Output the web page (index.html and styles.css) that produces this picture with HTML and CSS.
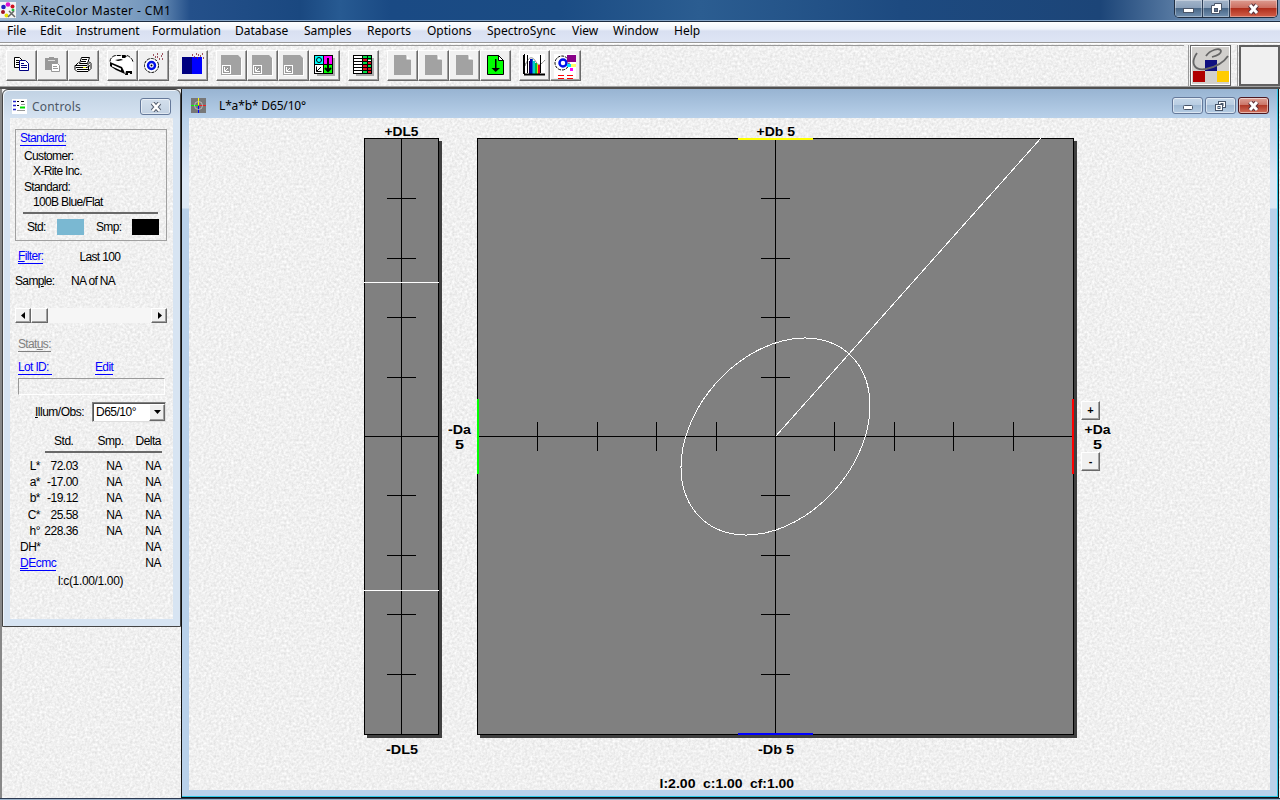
FILE: index.html
```
<!DOCTYPE html>
<html lang="en">
<head>
  <title>X-RiteColor Master - CM1</title>
  <meta charset="utf-8" />
  <link rel="stylesheet" href="styles.css">
</head>
<body>
  <div class="app">
    <div class="titlebar">
      <svg class="app-icon" width="16" height="16" viewBox="0 0 16 16">
        <rect width="16" height="16" fill="#f4f4f4"/>
        <circle cx="8" cy="2.500" r="2.300" fill="#e010d0"/><circle cx="3.500" cy="5" r="2.300" fill="#2020c0"/>
        <circle cx="12.500" cy="4.500" r="2" fill="#d01020"/><circle cx="3" cy="10" r="2" fill="#a01020"/>
        <circle cx="6.500" cy="13.500" r="2" fill="#e8e000"/><circle cx="13" cy="8" r="1.500" fill="#20c040"/>
        <path d="M9 9l6 6M14 9l-6 6" stroke="#666" stroke-width="1.500"/>
      </svg>
      <span class="title-text">X-RiteColor Master - CM1</span>
      <div class="window-buttons">
        <span class="wb wb-min"><svg width="13" height="12"><rect x="1.500" y="5.500" width="10" height="4" fill="#fff" stroke="#4a5568"/></svg></span>
        <span class="wb wb-max"><svg width="13" height="13"><path d="M4.500 1.500h7v7h-2v3h-8v-8h3z" fill="#fff" stroke="#4a5568"/><rect x="4.500" y="6.500" width="3" height="3" fill="#5c7390" stroke="#4a5568"/></svg></span>
        <span class="wb wb-close"><svg width="13" height="12" viewBox="0 0 13 12"><path d="M3 2l7 8M10 2l-7 8" stroke="#54303a" stroke-width="5"/><path d="M3 2l7 8M10 2l-7 8" stroke="#fff" stroke-width="3"/></svg></span>
      </div>
    </div>
    <div class="menubar">
      <span class="m1">File</span><span class="m2">Edit</span><span class="m3">Instrument</span><span class="m4">Formulation</span><span class="m5">Database</span><span class="m6">Samples</span><span class="m7">Reports</span><span class="m8">Options</span><span class="m9">SpectroSync</span><span class="m10">View</span><span class="m11">Window</span><span class="m12">Help</span>
    </div>
    <div class="toolbar">
      <div class="tools">
        <div class="tool-group">
          <span class="tool"><svg viewBox="0 0 30 30"><path d="M7.500 6.500h5l3 3v7h-8z" fill="#fff" stroke="#000"/><path d="M9 9.500h3M9 11.500h4M9 13.500h4" stroke="#000"/><path d="M12.500 9.500h6l3 3v7h-9z" fill="#fff" stroke="#000080"/><path d="M14 12.500h3M14 14.500h6M14 16.500h6" stroke="#000080"/></svg></span>
          <span class="tool"><svg viewBox="0 0 30 30"><path d="M7 7h4V6h5v1h4v12H7z" fill="#999"/><path d="M10 9.500h7" stroke="#ddd"/><path d="M13.500 12.500h6l2 2v6h-8z" fill="#fff" stroke="#999"/><path d="M15 15.500h4M15 17.500h5" stroke="#999"/></svg></span>
          <span class="tool"><svg viewBox="0 0 30 30"><path d="M10.500 12.500l2-6h8l-2 6z" fill="#fff" stroke="#000"/><path d="M13 8.500h5M12 10.500h5" stroke="#000"/><path d="M6.500 14.500l3-3M20 10.500l2 2v5l-3 3h-11l-2-2v-4h12l3-3" fill="#fff" stroke="#000"/><path d="M7 16.500h11l3-2M8 18.500h11M19.500 14.500v5" fill="none" stroke="#000"/><rect x="14" y="16" width="3" height="1" fill="#e0e000"/></svg></span>
        </div>
        <div class="tool-group">
          <span class="tool"><svg viewBox="0 0 30 30"><path d="M3 7l4-3h12l5 3 1 3v10l-2 2-5 1-14-7-1-3z" fill="#fff"/><path d="M2 10.500c0-3 3-6 6-6h11c3 1 6 4 6 7" fill="none" stroke="#000" stroke-dasharray="4 1"/><path d="M2 11l12 5 2 4 1 3-9-4-6-4zM17 24l1-4h6v3h-2v-1h-2v2zM7 9l6-1 2 1-5 1zM14 5h5l-2 2h-3z"/><path d="M4 13.500l9 4v2l-9-4z" fill="#fff"/></svg></span>
          <span class="tool"><svg viewBox="0 0 30 30"><circle cx="12.500" cy="14.500" r="7" fill="#fff" stroke="#000" stroke-dasharray="3 1"/><circle cx="12.500" cy="14.500" r="3.500" fill="#fff" stroke="#0010e8" stroke-width="2.500"/><circle cx="12.500" cy="14.500" r="1"/><path d="M14 4h1M18 3h1M22 5h1M16 6h1M20 8h1M23 8h1M18 6h1M23 3h1" stroke="#802030" stroke-width="1.500"/></svg></span>
        </div>
        <div class="tool-group">
          <span class="tool"><svg viewBox="0 0 30 30"><rect x="4" y="6" width="10" height="17" fill="#000080"/><rect x="14" y="6" width="10" height="17" fill="#0000ff"/><path d="M14 4h1M18 3h1M22 5h1M16 6h1M20 4h1M24 3h1M25 7h1M19 7h1" stroke="#802030" stroke-width="1.500"/></svg></span>
        </div>
        <div class="tool-group">
          <span class="tool"><svg viewBox="0 0 30 30"><path d="M5 5h17l3 3v17H5z" fill="#fff"/><path d="M4 4h17l3 3v17H4z" fill="#a2a2a2"/><rect x="5.500" y="14.500" width="8" height="8" fill="#999" stroke="#fff"/><path d="M7.500 16v4.500H12M8 20l3-3" stroke="#fff" fill="none"/></svg></span>
          <span class="tool"><svg viewBox="0 0 30 30"><path d="M5 5h17l3 3v17H5z" fill="#fff"/><path d="M4 4h17l3 3v17H4z" fill="#a2a2a2"/><rect x="5.500" y="14.500" width="8" height="8" fill="#999" stroke="#fff"/><path d="M7.500 16v4.500H12M8 20l3-3" stroke="#fff" fill="none"/></svg></span>
          <span class="tool"><svg viewBox="0 0 30 30"><path d="M5 5h17l3 3v17H5z" fill="#fff"/><path d="M4 4h17l3 3v17H4z" fill="#a2a2a2"/><rect x="5.500" y="14.500" width="8" height="8" fill="#999" stroke="#fff"/><path d="M7.500 16v4.500H12M8 20l3-3" stroke="#fff" fill="none"/></svg></span>
          <span class="tool"><svg viewBox="0 0 30 30"><path d="M7 7h18v18H7z" fill="#aaa"/><g stroke="#000"><rect x="4.500" y="4.500" width="9" height="9" fill="#0ff"/><rect x="13.500" y="4.500" width="9" height="9" fill="#f0f"/><rect x="4.500" y="13.500" width="9" height="9" fill="#fff"/><rect x="13.500" y="13.500" width="9" height="9" fill="#0f0"/><circle cx="9" cy="9" r="2.500" fill="none"/><path d="M6.500 15.500v5h5M7 20l4-4" fill="none"/><path d="M18 7v13M15 17l3 3 3-3" fill="none" stroke-width="2"/></g></svg></span>
        </div>
        <div class="tool-group">
          <span class="tool"><svg viewBox="0 0 30 30"><path d="M7 7h18v18H7z" fill="#aaa"/><rect x="4.500" y="4.500" width="18" height="18" fill="#fff" stroke="#000"/><path d="M14 5h8v4h-8zM14 11h4v3h-4zM18 14h4v3h-4zM14 19h4v3h-4z" fill="#0d4"/><path d="M14 8h4v3h-4zM18 11h4v3h-4zM14 14h4v5h-4zM18 17h4v5h-4z" fill="#e01020"/><path d="M4 7.500h19M4 10.500h19M4 13.500h19M4 16.500h19M4 19.500h19M13.500 4v19M18.500 4v19" stroke="#000"/></svg></span>
        </div>
        <div class="tool-group">
          <span class="tool"><svg viewBox="0 0 30 30"><path d="M6 4h12l5 5v15H6z" fill="#a2a2a2"/><path d="M18.500 4v4.500H23z" fill="#fff"/></svg></span>
          <span class="tool"><svg viewBox="0 0 30 30"><path d="M6 4h12l5 5v15H6z" fill="#a2a2a2"/><path d="M18.500 4v4.500H23z" fill="#fff"/></svg></span>
          <span class="tool"><svg viewBox="0 0 30 30"><path d="M6 4h12l5 5v15H6z" fill="#a2a2a2"/><path d="M18.500 4v4.500H23z" fill="#fff"/></svg></span>
          <span class="tool"><svg viewBox="0 0 30 30"><path d="M6.500 4.500h11l5 5v14h-16z" fill="#0f0" stroke="#000"/><path d="M17.500 4.500v5h5z" fill="#fff" stroke="#000"/><path d="M14 8h1.500v9H19l-4.300 4-4.200-4H14z"/></svg></span>
        </div>
        <div class="tool-group">
          <span class="tool"><svg viewBox="0 0 30 30"><rect x="3" y="3" width="22" height="21" fill="#fff"/><path d="M5 15c3-9 7-11 11-4 2 4 5 3 9-2M6 12l-2 4" fill="none" stroke="#888"/><path d="M9 10h1v13H9z" fill="#104"/><path d="M10 8h2v15h-2z" fill="#0000b0"/><path d="M12 8h1v15h-1z" fill="#06c"/><path d="M13 10h2v13h-2z" fill="#0cc"/><path d="M15 12h2v11h-2z" fill="#0b4"/><path d="M17 13h1v10h-1z" fill="#dd0"/><path d="M18 14h2v9h-2z" fill="#e02"/><path d="M4.500 3v20M7.500 4v18M20.500 4v18" fill="none" stroke="#000"/><path d="M4 23.500h21M4 4v19" stroke="#000" stroke-width="2"/></svg></span>
          <span class="tool"><svg viewBox="0 0 30 30"><rect x="3" y="3" width="22" height="24" fill="#fff"/><circle cx="11" cy="12" r="7" fill="#fff" stroke="#000" stroke-dasharray="3 1"/><circle cx="12" cy="12" r="3.500" fill="#fff" stroke="#0010e8" stroke-width="2.500"/><path d="M16 4h9v7h-9z" fill="#808"/><path d="M16 13h4v3h-4z" fill="#0df"/><path d="M20 13h5v3h-5z" fill="#ff6"/><path d="M19 17h3v3h-3z" fill="#f0f"/><path d="M7 24.500h6M16 24.500h6M7 27.500h6M16 27.500h6" stroke="#f00"/></svg></span>
        </div>
      </div>
      <div class="brand-cell">
        <div class="brand">
          <svg width="39" height="39" viewBox="0 0 39 39"><rect x="1" y="1" width="37" height="37" fill="#d2d0cd"/><rect x="2" y="25" width="12" height="11" fill="#b00000"/><rect x="14" y="14" width="12" height="11" fill="#101080"/><rect x="26" y="25" width="12" height="11" fill="#fc0"/><path d="M15 10C19 4 29 1 30 5c0 3-5 5-9 6M6 7C-1 17 3 25 15 23c10-2 18-7 22-13" fill="none" stroke="#666" stroke-width="1.800"/></svg>
        </div>
      </div>
      <div class="brand-cell">
        <div class="brand-empty"></div>
      </div>
    </div>

    <div class="desktop">
      <!-- chart window -->
      <div class="window chart-window">
        <div class="window-title">
          <svg width="15" height="15" viewBox="0 0 15 15"><rect width="15" height="15" fill="#777"/><path d="M7.500 0v7" stroke="#ff0"/><path d="M7.500 8v7" stroke="#00f"/><path d="M0 7.500h7" stroke="#0f0"/><path d="M8 7.500h7" stroke="#e22"/><circle cx="7.500" cy="7.500" r="4" fill="none" stroke="#bbb"/></svg>
          <span class="caption">L*a*b* D65/10°</span>
          <div class="child-buttons">
            <span class="cb"><svg width="12" height="10"><rect x="1.500" y="4.500" width="9" height="4" rx="1" fill="#fff" stroke="#475468"/></svg></span>
            <span class="cb"><svg width="13" height="12"><rect x="4.500" y="1.500" width="7" height="6" fill="#fff" stroke="#475468"/><rect x="7" y="3.500" width="2" height="2" fill="#b4cae0" stroke="#475468"/><rect x="1.500" y="4.500" width="7" height="6" fill="#fff" stroke="#475468"/><rect x="4" y="6.500" width="2" height="2" fill="#b4cae0" stroke="#475468"/></svg></span>
            <span class="cb cb-close"><svg width="13" height="10" viewBox="0 0 13 10"><path d="M3 1l7 8M10 1l-7 8" stroke="#5d3038" stroke-width="5"/><path d="M3 1l7 8M10 1l-7 8" stroke="#fff" stroke-width="3"/></svg></span>
          </div>
        </div>
        <div class="chart-area paper">
          <svg class="plots" width="1081" height="672" viewBox="189 118 1081 672">
            <!-- lightness strip -->
            <rect x="367" y="141" width="75" height="597" fill="#404040"/>
            <rect x="364.500" y="138.500" width="74" height="596" fill="#808080" stroke="#000"/>
            <path d="M401.500 139v595M365 436.500h74M387 198.500h29M387 258.500h29M387 317.500h29M387 377.500h29M387 495.500h29M387 555.500h29M387 614.500h29M387 674.500h29" stroke="#000"/>
            <path d="M364 282.500h75M364 590.500h75" stroke="#fff"/>
            <!-- a*b* plane -->
            <rect x="480" y="141" width="597" height="597" fill="#404040"/>
            <rect x="477.500" y="138.500" width="596" height="596" fill="#808080" stroke="#000"/>
            <path d="M775.500 139v595M478 436.500h595M761 198.500h29M761 258.500h29M761 317.500h29M761 377.500h29M761 495.500h29M761 555.500h29M761 614.500h29M761 674.500h29" stroke="#000"/>
            <path d="M537.500 422v29M597.500 422v29M656.500 422v29M716.500 422v29M834.500 422v29M894.500 422v29M953.500 422v29M1013.500 422v29" stroke="#000"/>
            <g fill="none" stroke="#fff" shape-rendering="crispEdges">
              <path d="M775.500 436.500L1041 138"/>
              <ellipse cx="775.500" cy="436.500" rx="110.700" ry="79.900" transform="rotate(-48.800 775.500 436.500)"/>
            </g>
            <rect x="738" y="138" width="75" height="2" fill="#ff0"/>
            <rect x="738" y="733" width="75" height="2" fill="#00f"/>
            <rect x="477" y="399" width="2" height="75" fill="#0f0"/>
            <rect x="1072" y="399" width="2" height="75" fill="#f00"/>
            <g class="axis-text">
              <text x="384.500" y="136" textLength="34" lengthAdjust="spacingAndGlyphs">+DL5</text>
              <text x="386" y="754" textLength="32" lengthAdjust="spacingAndGlyphs">-DL5</text>
              <text x="756.500" y="136" textLength="38.500" lengthAdjust="spacingAndGlyphs">+Db 5</text>
              <text x="758" y="754" textLength="36" lengthAdjust="spacingAndGlyphs">-Db 5</text>
              <text x="448" y="434" textLength="23" lengthAdjust="spacingAndGlyphs">-Da</text>
              <text x="455" y="449" textLength="9" lengthAdjust="spacingAndGlyphs">5</text>
              <text x="1084.500" y="434" textLength="26" lengthAdjust="spacingAndGlyphs">+Da</text>
              <text x="1093" y="449" textLength="9" lengthAdjust="spacingAndGlyphs">5</text>
              <text x="659.500" y="788" textLength="36" lengthAdjust="spacingAndGlyphs">l:2.00</text>
              <text x="703" y="788" textLength="39.500" lengthAdjust="spacingAndGlyphs">c:1.00</text>
              <text x="750" y="788" textLength="44" lengthAdjust="spacingAndGlyphs">cf:1.00</text>
            </g>
          </svg>
          <span class="zoom-button zoom-in">+</span>
          <span class="zoom-button zoom-out">-</span>
        </div>
      </div>

      <!-- controls window -->
      <div class="window controls-window">
        <div class="window-title">
          <svg width="15" height="15" viewBox="0 0 15 15"><rect width="15" height="15" fill="#fff"/><path d="M1 2.500h3M1 6.500h3M1 10.500h3" stroke="#22c" stroke-width="1.500"/><path d="M5 2.500h2M5 6.500h2M9 2.500h3" stroke="#000"/><path d="M8 8.500h5" stroke="#0d0" stroke-width="2"/><path d="M5 11.500h8M9 5.500h4" stroke="#999"/></svg>
          <span class="caption">Controls</span>
          <span class="cb controls-close"><svg width="12" height="10" viewBox="0 0 12 10"><path d="M2.500 1l7 8M9.500 1l-7 8" stroke="#555f70" stroke-width="4.500"/><path d="M2.500 1l7 8M9.500 1l-7 8" stroke="#fff" stroke-width="2.500"/></svg></span>
        </div>
        <div class="controls paper">
          <div class="standard-box">
            <div><span class="link">Standard:</span></div>
            <div class="customer-label">Customer:</div>
            <div class="customer">X-Rite Inc.</div>
            <div class="standard-label">Standard:</div>
            <div class="standard">100B Blue/Flat</div>
            <div class="swatches">
              <span>Std:</span><i class="swatch std"></i><span class="smp-label">Smp:</span><i class="swatch smp"></i>
            </div>
          </div>
          <div class="row filter-row"><span class="link"><u>F</u>ilter:</span><span class="filter-value">Last 100</span></div>
          <div class="row sample-row"><span class="sample-label">Sam<u>p</u>le:</span><span>NA of NA</span></div>
          <div class="scrollbar">
            <span class="sb-button"><svg width="5" height="7"><path d="M4 0v7L0 3.500z"/></svg></span>
            <span class="sb-thumb"></span>
            <span class="sb-button sb-right"><svg width="5" height="7"><path d="M1 0v7l4-3.500z"/></svg></span>
          </div>
          <div class="row status-row"><span class="link disabled">Stat<u>u</u>s:</span></div>
          <div class="row lot-row"><span class="link lot">Lot ID:</span><span class="link">Edit</span></div>
          <div class="lot-field"></div>
          <div class="illum-row">
            <span><u>I</u>llum/Obs:</span>
            <div class="select"><span>D65/10°</span><span class="select-arrow"><svg width="7" height="4"><path d="M0 0h7L3.500 4z"/></svg></span></div>
          </div>
          <div class="data-head"><span>Std.</span><span>Smp.</span><span>Delta</span></div>
          <div class="data">
            <span>L*</span><span>72.03</span><span>NA</span><span>NA</span>
            <span>a*</span><span>-17.00</span><span>NA</span><span>NA</span>
            <span>b*</span><span>-19.12</span><span>NA</span><span>NA</span>
            <span>C*</span><span>25.58</span><span>NA</span><span>NA</span>
            <span>h°</span><span>228.36</span><span>NA</span><span>NA</span>
            <span>DH*</span><span></span><span></span><span>NA</span>
            <span><b class="link"><u>D</u>Ecmc</b></span><span></span><span></span><span>NA</span>
          </div>
          <div class="ratio">l:c(1.00/1.00)</div>
        </div>
      </div>
    </div>
    <div class="bottom-edge"></div>
  </div>
</body>
</html>
```
FILE: styles.css
```
body{
  margin: 0;
  font-family: "Noto Sans", sans-serif;
  color: #000;
}
.app{
  width: 1280px;
  height: 800px;
  display: flex;
  flex-direction: column;
  overflow: hidden;
}
/* embossed paper texture */
.paper, .toolbar, .desktop{
  background-color: #f0f0f0;
  background-image: url("data:image/svg+xml,%3Csvg xmlns='http://www.w3.org/2000/svg' width='128' height='128'%3E%3Cfilter id='n' x='0' y='0' width='100%25' height='100%25' color-interpolation-filters='sRGB'%3E%3CfeTurbulence type='fractalNoise' baseFrequency='.4' numOctaves='2' stitchTiles='stitch'/%3E%3CfeColorMatrix values='.17 0 0 0 .855 .17 0 0 0 .855 .17 0 0 0 .855 0 0 0 0 1'/%3E%3C/filter%3E%3Crect width='128' height='128' filter='url(%23n)'/%3E%3C/svg%3E");
}
.titlebar{
  height: 20px;
  flex: none;
  display: flex;
  align-items: center;
  border-bottom: 1px solid #86a6c8;
  background: linear-gradient(90deg, #9db5cf 0, #8eabc9 100px, #6f93ba 155px, #24508a 190px, #1a4880 300px, #275a92 340px, #1a4a84 390px, #1b4c84 560px, #2b5d91 700px, #1d4a80 900px, #1c4578 1100px, #5b7da5 1180px, #7d99b8 1280px);
}
.title-text{
  margin-left: 5px;
  font-size: 12px;
  letter-spacing: 0.4px;
  white-space: nowrap;
}
.window-buttons{
  display: flex;
  margin-left: auto;
  align-self: flex-start;
  margin-right: 2px;
  height: 17px;
  border: 1px solid #1f2e42;
  border-top: 0;
  border-radius: 0 0 5px 5px;
  overflow: hidden;
}
.wb{
  display: flex;
  align-items: center;
  justify-content: center;
  width: 27px;
  border-right: 1px solid #2c3e57;
  background: linear-gradient(#a3b5ca 0, #8ba1bb 45%, #496787 50%, #7290b0 100%);
  box-shadow: inset 0 0 0 1px rgba(255,255,255,.35);
}
.wb-max{
  width: 26px;
}
.wb-close{
  width: 47px;
  border-right: 0;
  background: linear-gradient(#dd9c90 0, #cc6f60 45%, #b02f1c 50%, #d2604a 100%);
}
.menubar{
  height: 20px;
  flex: none;
  display: flex;
  gap: 14px;
  padding-left: 7px;
  border-top: 1px solid #1d2c40;
  background: linear-gradient(#fff 0, #f0f4fb 35%, #d9e0f1 45%, #dee5f5 100%);
  font-size: 12px;
  line-height: 18px;
  white-space: nowrap;
}
.menubar span{
  flex: none;
}
.m1{ width: 19px; }
.m2{ width: 22px; }
.m3{ width: 62px; }
.m4{ width: 69px; }
.m5{ width: 55px; }
.m6{ width: 49px; }
.m7{ width: 46px; }
.m8{ width: 46px; }
.m9{ width: 71px; }
.m10{ width: 27px; }
.m11{ width: 47px; }
.m12{ width: 27px; }
.toolbar{
  height: 47px;
  flex: none;
  display: flex;
  box-sizing: border-box;
  border-top: 1px solid #999;
  border-bottom: 2px solid #505050;
  box-shadow: inset 0 1px #fff, inset 0 -1px #a0a0a0;
}
.tools{
  flex: 1;
  display: flex;
  gap: 8px;
  margin: 2px 4px 0 0;
  padding: 4px 0 0 6px;
  border-top: 1px solid #999;
}
.tool-group{
  display: flex;
}
.tool{
  width: 31px;
  height: 31px;
  box-sizing: border-box;
  background: #f0f0f0;
  border: 1px solid #fff;
  border-right-color: #696969;
  border-bottom-color: #696969;
  box-shadow: inset -1px -1px #a0a0a0;
}
.tool svg{
  display: block;
  width: 30px;
  height: 30px;
}
.brand-cell{
  margin: 2px 0 1px;
  border-left: 1px solid #999;
}
.brand{
  width: 39px;
  height: 39px;
  margin: 0 6px 0 1px;
  border: 1px solid #666;
  background: #fff;
}
.brand-empty{
  width: 37px;
  height: 37px;
  margin: 0 0 0 1px;
  border: 2px solid #606060;
  background: #f0f0f0;
}
.desktop{
  flex: 1;
  position: relative;
  overflow: hidden;
  box-shadow: inset 2px 0 #888;
}
.bottom-edge{
  height: 1px;
  flex: none;
  border-top: 1px solid #2a3850;
  background: #9db3ca;
}
.window{
  position: absolute;
  box-sizing: border-box;
}
.window-title{
  display: flex;
  align-items: center;
  font-size: 12px;
}
.chart-window{
  left: 181px;
  top: 0;
  width: 1098px;
  height: 709px;
  padding: 0 8px 6px 7px;
  border: 1px solid #111;
  border-top: 0;
  background: linear-gradient(#98b4d2 0, #b9d1ea 30px, #dce8f5 90px, #dce8f5 119px, #b9d1ea 120px);
  box-shadow: inset -1px -1px #2fc8e8;
}
.chart-window .window-title{
  height: 29px;
  padding: 4px 1px 0 2px;
  box-sizing: border-box;
}
.caption{
  margin-left: 13px;
}
.chart-window .caption{
  letter-spacing: -0.15px;
}
.child-buttons{
  display: flex;
  gap: 2px;
  margin-left: auto;
}
.cb{
  width: 31px;
  height: 17px;
  box-sizing: border-box;
  border: 1px solid #65799a;
  border-radius: 3px;
  display: flex;
  align-items: center;
  justify-content: center;
  background: linear-gradient(#c6d7e9 0, #b9cde2 45%, #a1bad4 50%, #b5cce3 100%);
  box-shadow: inset 0 0 0 1px rgba(255,255,255,.5);
}
.cb-close{
  border-color: #4d1820;
  background: linear-gradient(#dda196 0, #cc7668 45%, #b13a28 50%, #d2705c 100%);
}
.chart-area{
  position: relative;
  height: 672px;
}
.plots{
  display: block;
}
.axis-text{
  font: bold 13px "Liberation Sans", Arial, sans-serif;
}
.zoom-button{
  position: absolute;
  left: 892px;
  width: 19px;
  height: 19px;
  box-sizing: border-box;
  border: 1px solid #fff;
  border-right-color: #696969;
  border-bottom-color: #696969;
  box-shadow: inset -1px -1px #a0a0a0;
  background: #f0f0f0;
  font: bold 11px/16px "Liberation Sans", Arial, sans-serif;
  text-align: center;
}
.zoom-in{
  top: 283px;
}
.zoom-out{
  top: 334px;
}
.controls-window{
  left: 2px;
  top: 0;
  width: 179px;
  height: 538px;
  padding: 0 7px;
  border: 1px solid #444;
  border-radius: 6px 6px 0 0;
  background: linear-gradient(#c1d2e3 0, #d7e4f2 30px);
  box-shadow: inset 1px 1px #eef4fa;
}
.controls-window .window-title{
  height: 28px;
  padding: 5px 2px 0;
  box-sizing: border-box;
  color: #4c5866;
}
.controls-window .caption{
  margin-left: 5px;
  letter-spacing: 0.2px;
}
.controls-close{
  margin-left: auto;
  background: linear-gradient(#d3dfec 0, #c2d1e2 100%);
}
.controls{
  height: 501px;
  padding: 11px 6px 0 5px;
  box-sizing: border-box;
  font: 12px/14px "Liberation Sans", Arial, sans-serif;
  letter-spacing: -0.65px;
  white-space: nowrap;
}
.standard-box{
  height: 112px;
  box-sizing: border-box;
  border: 1px solid #a0a0a0;
  padding: 1px 8px 0 4px;
}
.link{
  display: inline-block;
  color: #00f;
  font-weight: normal;
  border-bottom: 1px solid #00f;
}
.disabled{
  color: #808080;
  border-color: #808080;
}
.customer-label, .standard-label{
  margin-left: 4px;
}
.customer-label{
  margin-top: 3px;
}
.customer, .standard{
  margin: 1px 0 0 13px;
}
.standard-label{
  margin-top: 2px;
}
.swatches{
  display: flex;
  align-items: center;
  margin: 3px 0 0 3px;
  padding: 5px 0 0 4px;
  border-top: 2px solid #696969;
}
.swatch{
  width: 27px;
  height: 16px;
  flex: none;
}
.std{
  margin-left: auto;
  background: #7ab8d2;
}
.smp{
  margin-left: 12px;
  margin-right: -1px;
  background: #000;
}
.smp-label{
  width: 24px;
  margin-left: 12px;
}
.row{
  display: flex;
  padding-left: 3px;
}
.filter-row{
  margin-top: 8px;
}
.filter-value{
  margin: 1px 0 0 36px;
}
.sample-row{
  margin-top: 10px;
  padding-left: 0;
}
.sample-label{
  width: 56px;
}
.scrollbar{
  display: flex;
  height: 15px;
  margin-top: 20px;
  background: #f6f6f6;
}
.sb-button, .sb-thumb, .select-arrow{
  width: 16px;
  box-sizing: border-box;
  display: flex;
  align-items: center;
  justify-content: center;
  background: #f0f0f0;
  border: 1px solid #fff;
  border-right-color: #696969;
  border-bottom-color: #696969;
  box-shadow: inset -1px -1px #a0a0a0;
}
.sb-thumb{
  width: 17px;
}
.sb-right{
  margin-left: auto;
}
.status-row{
  margin-top: 14px;
}
.lot-row{
  margin-top: 8px;
}
.lot{
  width: 34px;
  margin-right: 43px;
}
.lot-field{
  height: 17px;
  margin: 3px 2px 0 3px;
  box-sizing: border-box;
  border: 1px solid #fff;
  border-top-color: #999;
  border-left-color: #999;
}
.illum-row{
  display: flex;
  align-items: center;
  justify-content: space-between;
  margin: 7px 1px 0 20px;
  letter-spacing: -0.5px;
}
.select{
  width: 74px;
  height: 20px;
  box-sizing: border-box;
  display: flex;
  justify-content: space-between;
  align-items: center;
  padding-left: 3px;
  background: #fff;
  border: 1px solid #808080;
  border-right-color: #ddd;
  border-bottom-color: #ddd;
  box-shadow: inset 1px 1px #555;
}
.select-arrow{
  height: 17px;
}
.data-head{
  display: flex;
  justify-content: flex-end;
  gap: 12px;
  margin: 12px 5px 0 30px;
  padding: 0 1px 3px;
  border-bottom: 2px solid #696969;
  letter-spacing: -0.5px;
}
.data-head span:first-child{
  margin-right: 12px;
}
.data{
  display: grid;
  grid-template-columns: 25px 38px 44px 39px;
  grid-auto-rows: 16.200px;
  margin: 6px 0 0 0;
  text-align: right;
  letter-spacing: -0.5px;
}
.data span:nth-child(n+21):nth-child(4n+1){
  text-align: left;
  padding-left: 5px;
}
.ratio{
  margin: 2px 0 0 43px;
  letter-spacing: -0.35px;
}
```
